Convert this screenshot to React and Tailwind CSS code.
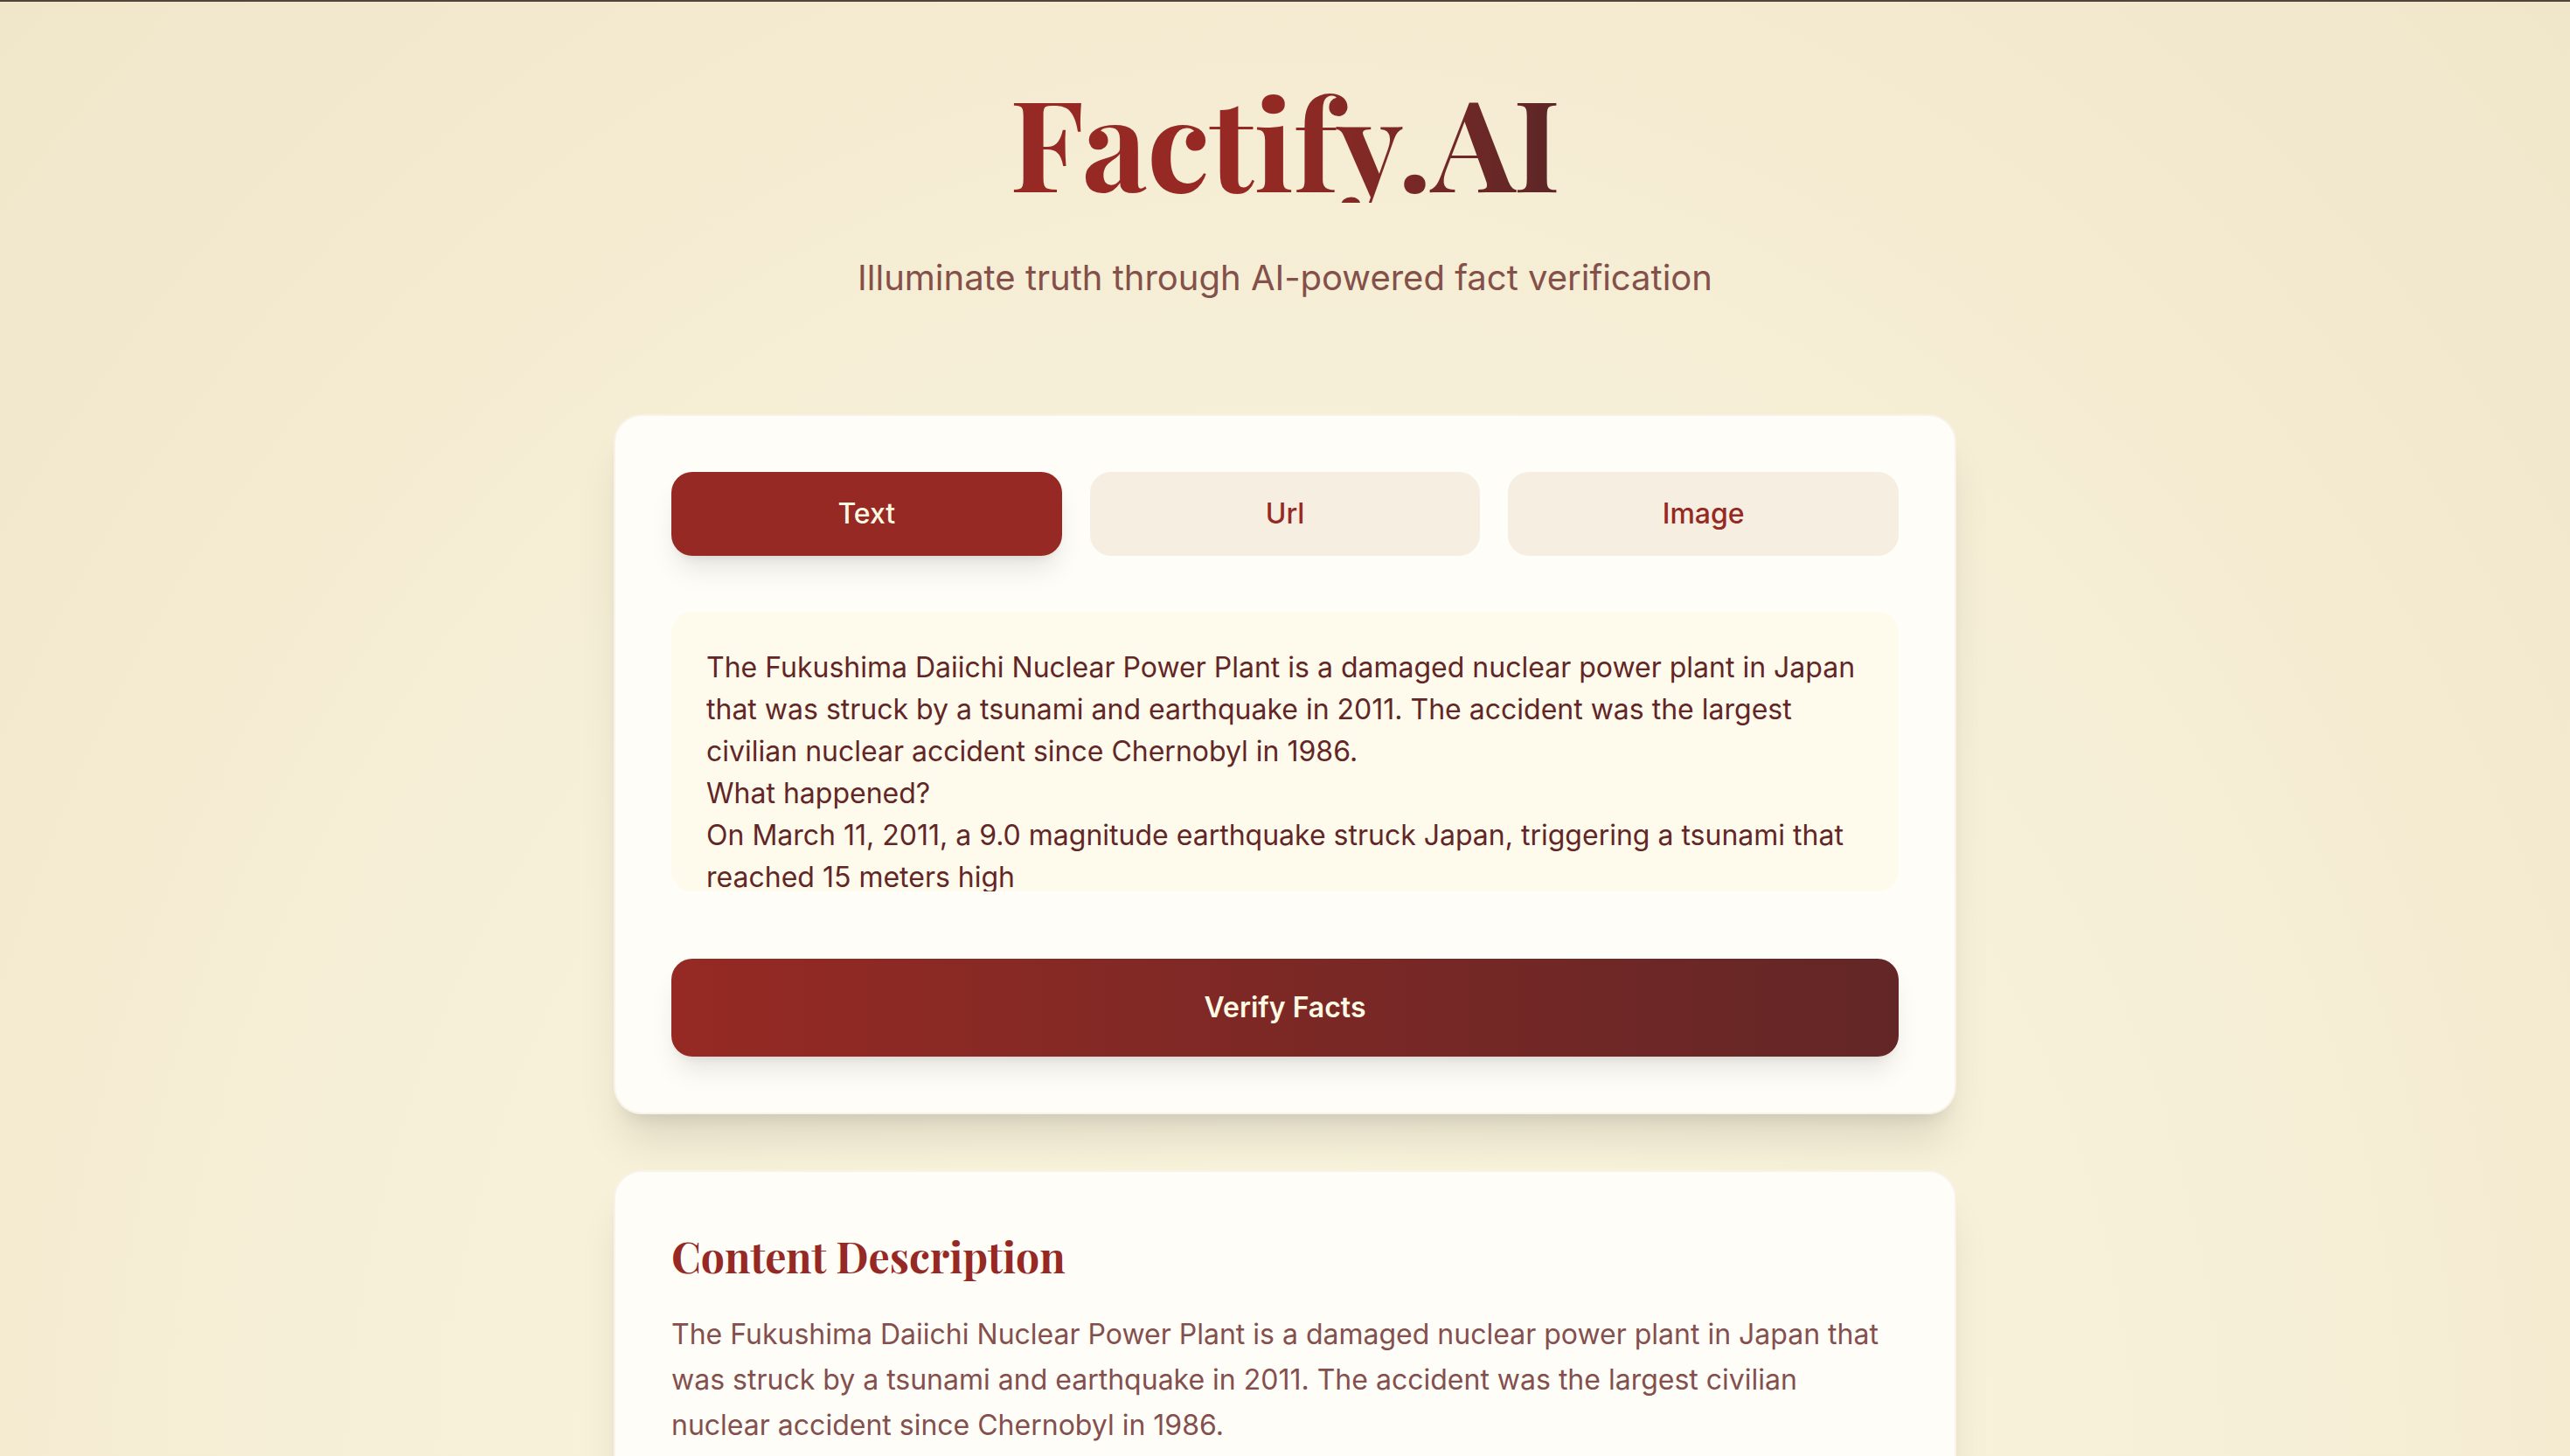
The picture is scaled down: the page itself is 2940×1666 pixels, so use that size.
const body = "The Fukushima Daiichi Nuclear Power Plant is a damaged nuclear power plant in Japan that was struck by a tsunami and earthquake in 2011. The accident was the largest civilian nuclear accident since Chernobyl in 1986.";
const initial = body + "\nWhat happened?\nOn March 11, 2011, a 9.0 magnitude earthquake struck Japan, triggering a tsunami that reached 15 meters high";

const card =
  "rounded-[32px] border-2 border-[#f8f2e8] bg-[#fefdf8] p-16 shadow-[0_40px_50px_-10px_rgba(0,0,0,0.1),0_16px_20px_-12px_rgba(0,0,0,0.1)]";
const raised = "shadow-[0_20px_30px_-6px_rgba(0,0,0,0.1),0_8px_12px_-8px_rgba(0,0,0,0.1)]";

function Tab({ active, children }) {
  return (
    <button
      type="button"
      className={
        "h-24 flex-1 rounded-3xl text-[32px] leading-[48px] font-medium " +
        (active ? "bg-[#962923] text-[#fef9e3] " + raised : "bg-[#f5eee1] text-[#962923]")
      }
    >
      {children}
    </button>
  );
}

export default function App() {
  return (
    <div className="min-h-screen overflow-hidden border-t-2 border-[#54433a] bg-[radial-gradient(ellipse_at_50%_100%,#faf5de_0%,#f6f0d8_50%,#f4ead0_75%,#f0e6ca_100%)] font-['Inter',sans-serif]">
      <header className="flex flex-col items-center pt-[86px]">
        <h1 className="bg-linear-to-r from-[#962923] from-45% to-[#5c2626] bg-clip-text font-['Playfair_Display','Liberation_Serif',serif] text-[144px] leading-[144px] font-bold text-transparent">Factify.AI</h1>
        <p className="mt-[58px] text-[40px] leading-[56px] text-[#84504a]">Illuminate truth through AI-powered fact verification</p>
      </header>
      <main className="mx-auto mt-32 flex w-full max-w-[1536px] flex-col gap-16">
        <section className={card}>
          <div className="flex gap-8">
            <Tab active>Text</Tab>
            <Tab>Url</Tab>
            <Tab>Image</Tab>
          </div>
          <textarea
            aria-label="Text to verify"
            defaultValue={initial}
            className="mt-16 block h-80 w-full resize-none overflow-hidden rounded-3xl bg-[#fefbed] p-10 text-[32px] leading-[48px] text-[#632626]"
          />
          <button
            type="button"
            className={"mt-[77px] block h-28 w-full rounded-3xl bg-linear-to-r from-[#962923] to-[#632626] text-[32px] font-semibold text-[#fef9e3] " + raised}
          >
            Verify Facts
          </button>
        </section>
        <section className={card}>
          <h2 className="font-['Playfair_Display','Liberation_Serif',serif] text-[48px] leading-[64px] font-bold text-[#962923]">Content Description</h2>
          <p className="mt-8 text-[32px] leading-[52px] text-[#84504e]">{body}</p>
        </section>
      </main>
    </div>
  );
}
